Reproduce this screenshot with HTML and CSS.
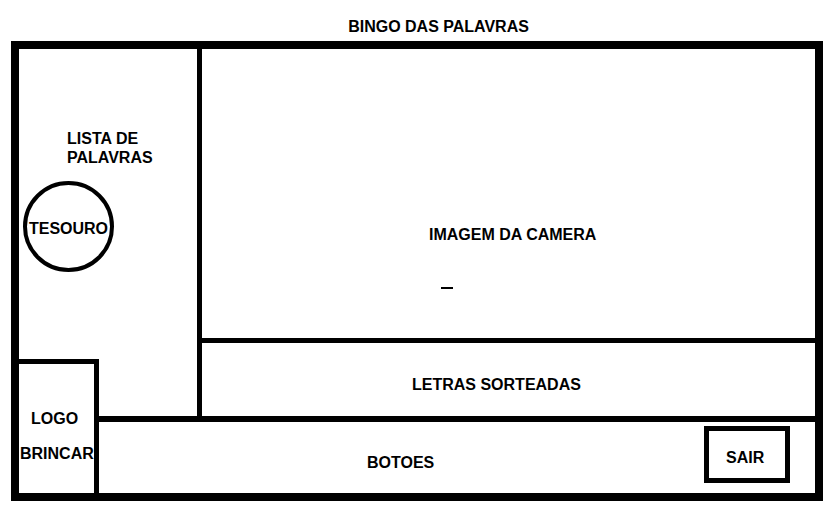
FILE: index.html
```html
<!DOCTYPE html>
<html lang="pt">
<head>
<meta charset="utf-8">
<title>Bingo das Palavras</title>
<link rel="stylesheet" href="styles.css">
</head>
<body>
<div class="title">BINGO DAS PALAVRAS</div>
<div class="board">
  <section class="lista">
    <div class="lista-title">LISTA DE<br>PALAVRAS</div>
    <div class="circle">TESOURO</div>
  </section>
  <section class="camera">
    <div>IMAGEM DA CAMERA</div>
    <div class="cursor"></div>
  </section>
  <section class="letras">LETRAS SORTEADAS</section>
  <section class="botoes">
    <div class="botoes-label">BOTOES</div>
    <div class="sair">SAIR</div>
  </section>
  <section class="logo">
    <div class="logo-line1">LOGO</div>
    <div class="logo-line2">BRINCAR</div>
  </section>
</div>
</body>
</html>
```
FILE: styles.css
```css
html, body {
  margin: 0;
  padding: 0;
  background: #fff;
}
body {
  font-family: "Liberation Sans", Arial, sans-serif;
  font-weight: bold;
  font-size: 16px;
  line-height: 18px;
  color: #000;
}
.title {
  box-sizing: border-box;
  height: 41px;
  padding: 18px 0 0 46px;
  text-align: center;
}
.board {
  box-sizing: border-box;
  margin-left: 11px;
  width: 812px;
  height: 460px;
  border: 8px solid #000;
  display: grid;
  grid-template-columns: 80px 103px 613px;
  grid-template-rows: 294px 16px 57px 77px;
}
.lista {
  grid-column: 1 / 3;
  grid-row: 1 / 4;
  box-sizing: border-box;
  border-right: 5px solid #000;
  padding-top: 80px;
  line-height: 19px;
}
.lista-title {
  padding-left: 48px;
}
.circle {
  box-sizing: border-box;
  width: 91px;
  height: 91px;
  margin: 14px 0 0 4px;
  border: 4px solid #000;
  border-radius: 50%;
  display: flex;
  align-items: center;
  justify-content: center;
  padding-top: 5px;
  line-height: 18px;
}
.camera {
  grid-column: 3;
  grid-row: 1;
  box-sizing: border-box;
  border-bottom: 5px solid #000;
  padding: 177px 0 0 227px;
}
.cursor {
  width: 12px;
  height: 2px;
  background: #000;
  margin: 43px 0 0 12px;
}
.letras {
  grid-column: 3;
  grid-row: 2 / 4;
  box-sizing: border-box;
  padding: 33px 0 0 210px;
}
.botoes {
  grid-column: 2 / 4;
  grid-row: 4;
  box-sizing: border-box;
  border-top: 6px solid #000;
  display: flex;
  align-items: flex-start;
}
.botoes-label {
  margin: 32px 0 0 268px;
}
.sair {
  box-sizing: border-box;
  width: 86px;
  height: 57px;
  margin: 4px 25px 0 auto;
  border: 5px solid #000;
  padding: 18px 0 0 17px;
}
.logo {
  grid-column: 1;
  grid-row: 3 / 5;
  box-sizing: border-box;
  border-top: 5px solid #000;
  border-right: 5px solid #000;
  background: #fff;
  z-index: 1;
  padding-top: 46px;
  white-space: nowrap;
}
.logo-line1 {
  margin-left: 12px;
}
.logo-line2 {
  margin: 17px 0 0 1px;
}
```
